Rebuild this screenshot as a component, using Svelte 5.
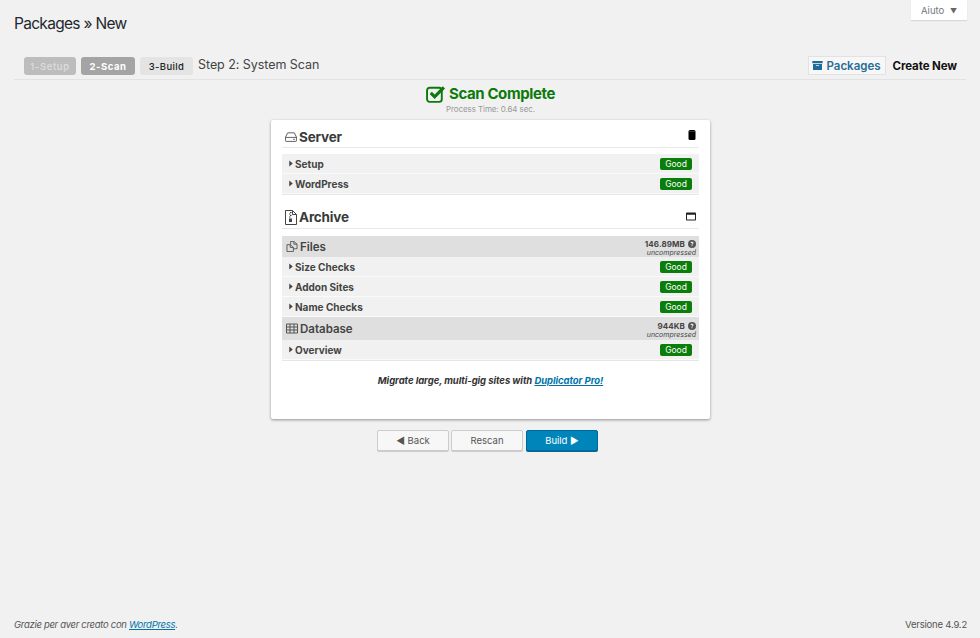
<script lang="ts">
  const serverRows = ['Setup', 'WordPress'];
  const fileRows = ['Size Checks', 'Addon Sites', 'Name Checks'];
</script>

{#snippet caret()}
  <svg class="caret" viewBox="0 0 4 8" aria-hidden="true"><path d="M0 0.5 4 4 0 7.5z" /></svg>
{/snippet}

{#snippet help()}
  <svg class="help" viewBox="0 0 16 16" aria-hidden="true">
    <circle cx="8" cy="8" r="8" fill="#555" />
    <path d="M5 6.200C5.100 4.600 6.400 3.500 8 3.500c1.700 0 3.100 1 3.100 2.700 0 2-2.200 2-2.200 3.500H7c0-2.400 2.100-2.400 2.100-3.500 0-.5-.5-.9-1.100-.9-.6 0-1 .4-1.100 .9z" fill="#eee" />
    <rect x="7" y="10.500" width="1.900" height="1.900" fill="#eee" />
  </svg>
{/snippet}

{#snippet row(label: string)}
  <div class="row">
    <span class="row-label">{@render caret()}{label}</span>
    <span class="badge">Good</span>
  </div>
{/snippet}

<div class="page">
  <header class="top">
    <h1>Packages » New</h1>
    <button class="help-tab">Aiuto <span class="tri">▼</span></button>
  </header>

  <div class="wizard">
    <div class="steps">
      <span class="step done">1-Setup</span>
      <span class="step active">2-Scan</span>
      <span class="step todo">3-Build</span>
      <span class="step-title">Step 2: System Scan</span>
    </div>
    <div class="nav">
      <a class="nav-packages" href="#packages">
        <svg viewBox="0 0 16 14" aria-hidden="true">
          <path d="M0 0h16v3.500H0z" fill="#1f6c9a" />
          <path fill-rule="evenodd" d="M1 4.500h14V14H1zM5.500 6.500v1.200h5V6.500z" fill="#1f6c9a" />
        </svg>
        Packages
      </a>
      <a class="nav-create" href="#new">Create New</a>
    </div>
  </div>

  <div class="status">
    <div class="status-title">
      <svg viewBox="0 0 19 17" aria-hidden="true">
        <rect x="1" y="2.500" width="14" height="13.500" rx="2.500" fill="none" stroke="#0b7a0b" stroke-width="1.800" />
        <path d="M4.500 7.500 8.200 11.200 17 2.300" fill="none" stroke="#0b7a0b" stroke-width="3" />
      </svg>
      Scan Complete
    </div>
    <div class="status-time">Process Time: 0.64 sec.</div>
  </div>

  <main class="card">
    <div class="section-head">
      <h2>
        <svg viewBox="0 0 14 12" aria-hidden="true">
          <path d="M3 1h8l2.500 5v4.500a.8.8 0 0 1-.8 .8H1.300a.8.8 0 0 1-.8-.8V6zM.5 6.500h13" fill="none" stroke="#444" stroke-width="1" />
          <path d="M9.500 8.800h2" stroke="#444" stroke-width="1" />
        </svg>
        Server
      </h2>
      <svg class="toggle" viewBox="0 0 8 10" aria-hidden="true">
        <rect x="0.500" y="0" width="7" height="10" rx="1.500" fill="#000" />
        <path d="M1 1.500h6" stroke="#555" stroke-width="0.600" />
      </svg>
    </div>
    <div class="group">
      {#each serverRows as label}
        {@render row(label)}
      {/each}
    </div>

    <div class="section-head archive">
      <h2>
        <svg class="tall" viewBox="0 0 12 15" aria-hidden="true">
          <path d="M.5 .5h7l4 4v10H.5zM7.500 .5v4h4" fill="none" stroke="#444" stroke-width="1" />
          <path d="M5 2h1.500v1H5zM4 3.500h1.500v1H4zM5 5h1.500v1H5zM4 6.500h1.500v1H4zM4 8.500h3v3.500H4z" fill="#444" />
        </svg>
        Archive
      </h2>
      <svg class="toggle wide" viewBox="0 0 10 8" aria-hidden="true">
        <path fill-rule="evenodd" d="M.8 0h8.400a.8.8 0 0 1 .8 .8v6.400a.8.8 0 0 1-.8 .8H.8a.8.8 0 0 1-.8-.8V.8A.8.8 0 0 1 .8 0zM1 2.200V7h8V2.200z" fill="#222" />
      </svg>
    </div>
    <div class="group">
      <div class="sub-head files">
        <span class="sub-title">
          <svg viewBox="0 0 12 12" aria-hidden="true">
            <path d="M4.500 4V.5H8L11.500 3.500V8.500H7.500M8 .5V3.500H11.500M.5 4H4L7.500 7V11.500H.5zM4 4V7H7.500" fill="none" stroke="#555" stroke-width="1" />
          </svg>
          Files
        </span>
        <span class="size">
          <span class="size-num">146.89MB {@render help()}</span>
          <em>uncompressed</em>
        </span>
      </div>
      {#each fileRows as label}
        {@render row(label)}
      {/each}
      <div class="sub-head db">
        <span class="sub-title">
          <svg viewBox="0 0 12 10" aria-hidden="true">
            <path d="M.5 .5h11v9H.5zM.5 3.500h11M.5 6.500h11M4 .5v9M8 .5v9" fill="none" stroke="#555" stroke-width="1" />
          </svg>
          Database
        </span>
        <span class="size">
          <span class="size-num">944KB {@render help()}</span>
          <em>uncompressed</em>
        </span>
      </div>
      {@render row('Overview')}
    </div>

    <p class="promo">Migrate large, multi-gig sites with <a href="#pro">Duplicator Pro!</a></p>
  </main>

  <div class="actions">
    <button class="btn">◀ Back</button>
    <button class="btn">Rescan</button>
    <button class="btn primary">Build ▶</button>
  </div>

  <footer class="foot">
    <em>Grazie per aver creato con <a href="#wp">WordPress</a>.</em>
    <span>Versione 4.9.2</span>
  </footer>
</div>

<style>
  :global(body) {
    margin: 0;
    background: #f1f1f1;
    font-family: Inter, "Liberation Sans", sans-serif;
    color: #444;
  }

  a {
    color: #0073aa;
  }

  .page {
    height: 638px;
    display: flex;
    flex-direction: column;
    overflow: hidden;
  }

  .top {
    display: flex;
    justify-content: space-between;
    align-items: flex-start;
    padding: 0 13px 0 14px;
    height: 56px;
  }

  h1 {
    margin: 14px 0 0;
    font-size: 15.500px;
    line-height: 20px;
    font-weight: 400;
    letter-spacing: -0.700px;
    color: #23282d;
  }

  .help-tab {
    width: 56px;
    height: 20px;
    padding: 0;
    border: 0;
    background: #fff;
    box-shadow: 0 1px 1px rgba(0, 0, 0, 0.1);
    font: 9.500px Inter, sans-serif;
    color: #72777c;
  }

  .tri {
    font-size: 7px;
    margin-left: 3px;
    color: #666;
  }

  .wizard {
    margin: 0 14px;
    height: 24px;
    box-sizing: border-box;
    padding: 0 9px 0 10px;
    border-bottom: 1px solid #e2e2e2;
    display: flex;
    justify-content: space-between;
    align-items: flex-start;
  }

  .steps {
    display: flex;
    align-items: flex-start;
  }

  .step {
    width: 52px;
    height: 18px;
    margin-top: 1px;
    margin-right: 5px;
    border-radius: 3px;
    display: flex;
    align-items: center;
    justify-content: center;
    font-size: 9.500px;
    font-weight: 500;
    letter-spacing: 0.650px;
  }

  .done {
    background: #bdbdbd;
    color: #dedede;
  }

  .active {
    width: 54px;
    background: #a4a4a4;
    color: #fff;
    font-weight: 700;
    letter-spacing: 0.500px;
  }

  .todo {
    width: 53px;
    background: #e4e4e4;
    color: #222;
    letter-spacing: 0.350px;
  }

  .step-title {
    margin-top: 1px;
    font-size: 12.500px;
    line-height: 16px;
    letter-spacing: -0.050px;
    color: #444;
  }

  .nav {
    display: flex;
    align-items: center;
    gap: 7px;
  }

  .nav a {
    text-decoration: none;
    font-size: 11.500px;
    font-weight: 600;
    height: 19px;
    display: flex;
    align-items: center;
  }

  .nav-packages {
    width: 78px;
    box-sizing: border-box;
    justify-content: center;
    gap: 3px;
    background: #f7f7f7;
    border: 1px solid #e2e2e2;
    color: #2a6c96;
  }

  .nav-packages svg {
    width: 11px;
    height: 9px;
  }

  .nav .nav-create {
    color: #111;
    font-weight: 700;
    font-size: 11.500px;
    letter-spacing: -0.100px;
  }

  .status {
    text-align: center;
    padding-top: 4px;
    height: 40px;
    box-sizing: border-box;
    margin-left: 1px;
  }

  .status-title {
    display: flex;
    justify-content: center;
    align-items: center;
    gap: 3px;
    font-size: 15px;
    font-weight: 700;
    line-height: 20px;
    letter-spacing: -0.400px;
    color: #0b7a0b;
  }

  .status-title svg {
    width: 20px;
    height: 18px;
  }

  .status-time {
    font-size: 8px;
    line-height: 10px;
    letter-spacing: -0.100px;
    color: #999;
  }

  .card {
    align-self: center;
    margin-left: 1px;
    width: 439px;
    height: 299px;
    box-sizing: border-box;
    padding: 0 11px;
    background: #fff;
    border-radius: 2px;
    box-shadow: 0 1px 3px rgba(0, 0, 0, 0.4);
  }

  .section-head {
    height: 28px;
    margin-bottom: 6px;
    border-bottom: 1px solid #e8e8e8;
    display: flex;
    justify-content: space-between;
    align-items: center;
    padding: 6px 3px 0;
    box-sizing: border-box;
  }

  .archive {
    margin-top: 5px;
    height: 29px;
    margin-bottom: 7px;
  }

  h2 {
    margin: 0;
    display: flex;
    align-items: center;
    gap: 2px;
    font-size: 13.500px;
    font-weight: 700;
    letter-spacing: -0.200px;
    color: #3a3a3a;
  }

  h2 svg {
    width: 12px;
    height: 10px;
  }

  h2 svg.tall {
    height: 15px;
  }

  .toggle {
    width: 8px;
    height: 10px;
    margin-right: 0;
    margin-top: -4px;
  }

  .wide {
    width: 10px;
    height: 9px;
    margin-top: -2px;
  }

  .group {
    background: #f1f1f1;
    border-bottom: 1px solid #e6e6e6;
  }

  .row {
    height: 20px;
    box-sizing: border-box;
    padding: 0 7px 0 7px;
    border-bottom: 1px solid #fafafa;
    display: flex;
    justify-content: space-between;
    align-items: center;
  }

  .row-label {
    display: flex;
    align-items: center;
    gap: 2px;
    font-size: 10px;
    font-weight: 700;
    color: #444;
  }

  .caret {
    width: 4px;
    height: 7px;
    fill: #444;
  }

  .badge {
    width: 32px;
    height: 12px;
    border-radius: 2px;
    background: #0a7d0a;
    color: #fff;
    font-size: 8.500px;
    line-height: 12px;
    text-align: center;
  }

  .sub-head {
    background: #dfdfdf;
    display: flex;
    justify-content: space-between;
    align-items: center;
    padding: 0 3px 0 4px;
  }

  .files {
    height: 21px;
  }

  .db {
    height: 23px;
  }

  .sub-title {
    display: flex;
    align-items: center;
    gap: 2px;
    font-size: 11.500px;
    font-weight: 600;
    color: #444;
  }

  .sub-title svg {
    width: 12px;
    height: 11px;
  }

  .size {
    display: flex;
    flex-direction: column;
    align-items: flex-end;
    line-height: 9px;
    padding-top: 3px;
  }

  .size-num {
    display: flex;
    align-items: center;
    gap: 3px;
    font-size: 8px;
    line-height: 8px;
    font-weight: 700;
    letter-spacing: 0.100px;
  }

  .help {
    width: 8px;
    height: 8px;
  }

  .size em {
    font-size: 7px;
    color: #444;
  }

  .promo {
    margin: 14px 0 0;
    text-align: center;
    font-size: 9.500px;
    font-style: italic;
    font-weight: 700;
    letter-spacing: -0.060px;
    color: #333;
  }

  .actions {
    display: flex;
    justify-content: center;
    gap: 2px;
    margin-top: 11px;
    margin-left: -5px;
  }

  .btn {
    width: 72px;
    height: 21px;
    padding: 0;
    border: 1px solid #ccc;
    border-radius: 2px;
    background: #f7f7f7;
    box-shadow: 0 1px 0 #ccc;
    font: 9.500px Inter, sans-serif;
    color: #555;
  }

  .primary {
    margin-left: 1px;
    background: #0085ba;
    border-color: #006799;
    box-shadow: 0 1px 0 #006799;
    color: #fff;
  }

  .foot {
    margin-top: auto;
    padding: 0 13px 6px 14px;
    display: flex;
    justify-content: space-between;
    font-size: 9.500px;
    line-height: 14px;
    letter-spacing: -0.200px;
    color: #555;
  }

  .foot em {
    letter-spacing: -0.300px;
  }
</style>
